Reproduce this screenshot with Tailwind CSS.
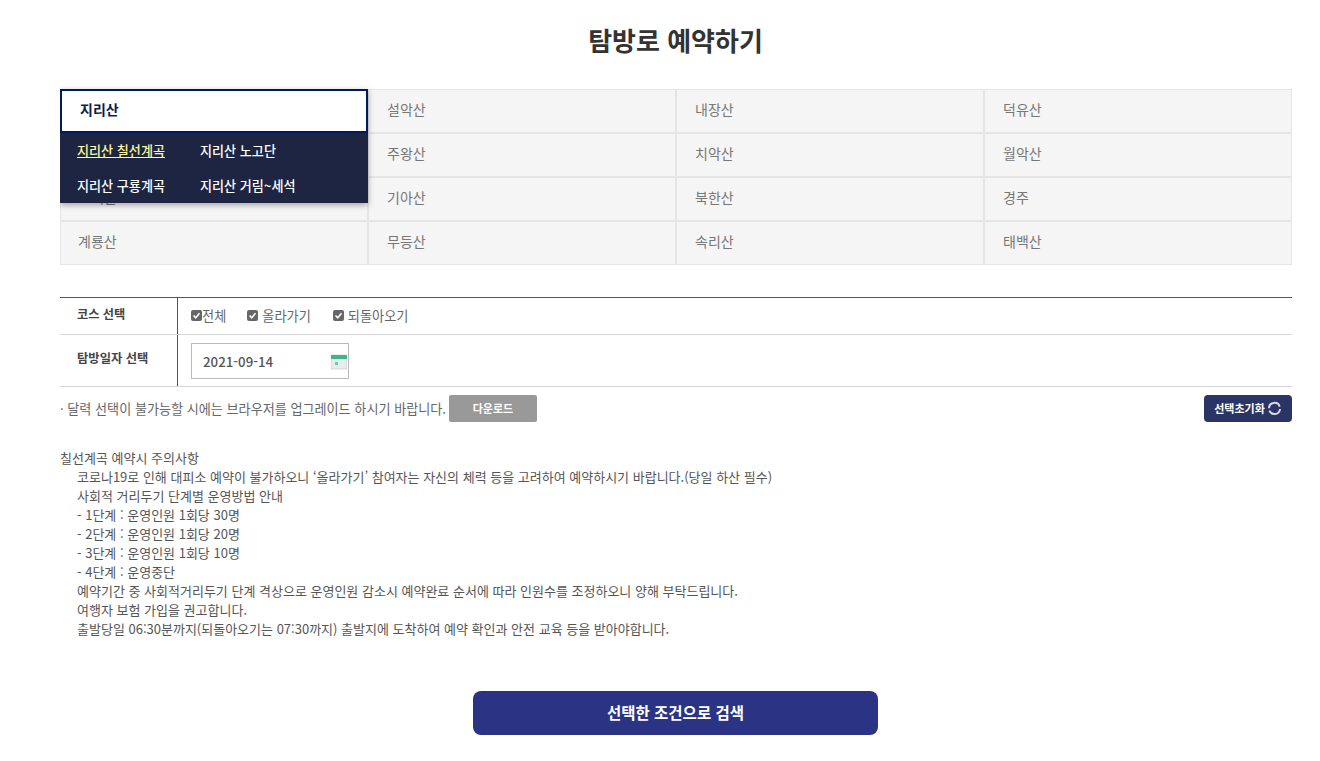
<!DOCTYPE html>
<html lang="ko">
  <head>
    <meta charset="UTF-8" />
    <title>탐방로 예약하기</title>
    <script src="https://cdn.jsdelivr.net/npm/@tailwindcss/browser@4"></script>
  </head>
  <body class="bg-white font-['Noto_Sans_CJK_KR','Noto_Sans',sans-serif] text-[#555]">
    <div class="w-[1232px] ml-[60px] h-[761px] overflow-hidden">
      <!-- Title -->
      <h1 class="pt-[20px] pr-[1px] h-[89px] text-center text-[26px] leading-[39px] font-bold text-[#333]">탐방로 예약하기</h1>

      <!-- Mountain grid -->
      <div class="relative grid grid-cols-4 text-[14px] text-[#777]">
        <div class="h-11 pl-[17px] pb-1 flex items-center bg-[#f5f5f5] border border-[#e5e5e5]">지리산</div>
        <div class="h-11 pl-[18px] pb-1 flex items-center bg-[#f5f5f5] border border-[#e5e5e5]">설악산</div>
        <div class="h-11 pl-[18px] pb-1 flex items-center bg-[#f5f5f5] border border-[#e5e5e5]">내장산</div>
        <div class="h-11 pl-[18px] pb-1 flex items-center bg-[#f5f5f5] border border-[#e5e5e5]">덕유산</div>
        <div class="h-11 pl-[17px] pb-1 flex items-center bg-[#f5f5f5] border border-[#e5e5e5]">가야산</div>
        <div class="h-11 pl-[18px] pb-1 flex items-center bg-[#f5f5f5] border border-[#e5e5e5]">주왕산</div>
        <div class="h-11 pl-[18px] pb-1 flex items-center bg-[#f5f5f5] border border-[#e5e5e5]">치악산</div>
        <div class="h-11 pl-[18px] pb-1 flex items-center bg-[#f5f5f5] border border-[#e5e5e5]">월악산</div>
        <div class="h-11 pl-[17px] pb-1 flex items-center bg-[#f5f5f5] border border-[#e5e5e5]">소백산</div>
        <div class="h-11 pl-[18px] pb-1 flex items-center bg-[#f5f5f5] border border-[#e5e5e5]">기아산</div>
        <div class="h-11 pl-[18px] pb-1 flex items-center bg-[#f5f5f5] border border-[#e5e5e5]">북한산</div>
        <div class="h-11 pl-[18px] pb-1 flex items-center bg-[#f5f5f5] border border-[#e5e5e5]">경주</div>
        <div class="h-11 pl-[17px] pb-1 flex items-center bg-[#f5f5f5] border border-[#e5e5e5]">계룡산</div>
        <div class="h-11 pl-[18px] pb-1 flex items-center bg-[#f5f5f5] border border-[#e5e5e5]">무등산</div>
        <div class="h-11 pl-[18px] pb-1 flex items-center bg-[#f5f5f5] border border-[#e5e5e5]">속리산</div>
        <div class="h-11 pl-[18px] pb-1 flex items-center bg-[#f5f5f5] border border-[#e5e5e5]">태백산</div>

        <!-- Open dropdown over the first column -->
        <div class="absolute left-0 top-0 w-[308px] shadow-[0_2px_6px_rgba(0,0,0,0.35)]">
          <div class="h-11 pl-[18px] pb-1 flex items-center bg-white border-2 border-[#001a5e] text-[14px] font-bold text-[#0d1b4c]">지리산</div>
          <div class="h-[70px] pl-[17px] bg-[#1d2542] text-white text-[13.1px] font-medium">
            <div class="flex h-[35px] items-center">
              <a class="w-[123px] text-[#fff799] underline">지리산 칠선계곡</a>
              <a>지리산 노고단</a>
            </div>
            <div class="flex h-[35px] pt-[1px] items-center">
              <a class="w-[123px]">지리산 구룡계곡</a>
              <a>지리산 거림~세석</a>
            </div>
          </div>
        </div>
      </div>

      <!-- Search options -->
      <div class="mt-8 border-t border-[#555] text-[13px]">
        <div class="flex h-[37px] border-b border-[#d5d5d5]">
          <div class="w-[118px] pl-[17px] pt-[6px] border-r border-[#555] text-[12.2px] leading-[20px] font-bold text-[#444]">코스 선택</div>
          <div class="flex items-center pl-[13px] text-[13.2px] text-[#666]">
            <span class="flex items-center mr-[21px]">
              <svg class="w-[11px] h-[11px]" viewBox="0 0 11 11"><rect width="11" height="11" rx="2" fill="#666"/><path d="M2.5 5.5l2.2 2.3 3.8-4.6" fill="none" stroke="#fff" stroke-width="1.5"/></svg>전체
            </span>
            <span class="flex items-center mr-[22px]">
              <svg class="w-[11px] h-[11px] mr-[4px]" viewBox="0 0 11 11"><rect width="11" height="11" rx="2" fill="#666"/><path d="M2.5 5.5l2.2 2.3 3.8-4.6" fill="none" stroke="#fff" stroke-width="1.5"/></svg>올라가기
            </span>
            <span class="flex items-center">
              <svg class="w-[11px] h-[11px] mr-[4px]" viewBox="0 0 11 11"><rect width="11" height="11" rx="2" fill="#666"/><path d="M2.5 5.5l2.2 2.3 3.8-4.6" fill="none" stroke="#fff" stroke-width="1.5"/></svg>되돌아오기
            </span>
          </div>
        </div>
        <div class="flex h-[52px] border-b border-[#d5d5d5]">
          <div class="w-[118px] pl-[17px] pt-[13px] border-r border-[#555] text-[12.3px] leading-[20px] font-bold text-[#444]">탐방일자 선택</div>
          <div class="pl-[13px] pt-[8px]">
            <div class="flex items-center justify-between w-[158px] h-[36px] pl-[11px] pt-[1px] pr-[1px] border border-[#bbb] text-[13.3px] font-medium text-[#555]">
              2021-09-14
              <svg class="w-4 h-4" viewBox="0 0 16 16"><rect x="0" y="1" width="16" height="14" fill="#e8ecec" stroke="#bbb" stroke-width="0.5"/><rect x="0" y="1" width="16" height="4" fill="#3fb58c"/><rect x="4" y="8" width="3" height="3" fill="#6fc9a8"/></svg>
            </div>
          </div>
        </div>
      </div>

      <div class="flex items-center justify-between mt-2 h-[27px]">
        <div class="flex items-center text-[13.1px] text-[#666]">
          <span class="pr-[3px]">· 달력 선택이 불가능할 시에는 브라우저를 업그레이드 하시기 바랍니다.</span>
          <a class="flex items-center justify-center w-[88px] h-[27px] rounded-[2px] bg-[#999] text-white text-[11px] font-bold">다운로드</a>
        </div>
        <a class="flex items-center justify-center gap-[2px] w-[88px] h-[27px] rounded-[4px] bg-[#2b3565] text-white text-[11px] font-bold">
          선택초기화
          <svg class="w-[15px] h-[15px]" viewBox="0 0 15 15"><path d="M2 7.2A5.5 5.5 0 0 1 12.7 5.6M13 8A5.5 5.5 0 0 1 2.4 9.6" fill="none" stroke="#d5d9e6" stroke-width="2"/></svg>
        </a>
      </div>

      <!-- Notes -->
      <div class="mt-[26px] text-[13px] leading-[19px] text-[#555]">
        <p>칠선계곡 예약시 주의사항</p>
        <div class="pl-[17px]">
          <p>코로나19로 인해 대피소 예약이 불가하오니 ‘올라가기’ 참여자는 자신의 체력 등을 고려하여 예약하시기 바랍니다.(당일 하산 필수)</p>
          <p>사회적 거리두기 단계별 운영방법 안내</p>
          <p>- 1단계 : 운영인원 1회당 30명</p>
          <p>- 2단계 : 운영인원 1회당 20명</p>
          <p>- 3단계 : 운영인원 1회당 10명</p>
          <p>- 4단계 : 운영중단</p>
          <p>예약기간 중 사회적거리두기 단계 격상으로 운영인원 감소시 예약완료 순서에 따라 인원수를 조정하오니 양해 부탁드립니다.</p>
          <p>여행자 보험 가입을 권고합니다.</p>
          <p>출발당일 06:30분까지(되돌아오기는 07:30까지) 출발지에 도착하여 예약 확인과 안전 교육 등을 받아야합니다.</p>
        </div>
      </div>

      <!-- Search button -->
      <div class="mt-[53px] pr-[1px] flex justify-center">
        <a class="flex items-center justify-center w-[405px] h-11 rounded-lg bg-[#2b3385] text-white text-[15.5px] font-bold">선택한 조건으로 검색</a>
      </div>
    </div>
  </body>
</html>
